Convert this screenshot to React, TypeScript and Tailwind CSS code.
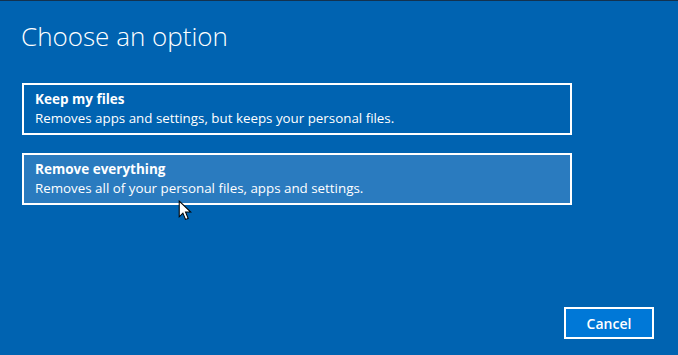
const options = [
  { id: 1, title: "Keep my files", desc: "Removes apps and settings, but keeps your personal files.", hover: false },
  { id: 2, title: "Remove everything", desc: "Removes all of your personal files, apps and settings.", hover: true },
];

function Cursor() {
  return (
    <svg className="absolute left-[178px] top-[199px]" width="14" height="21" viewBox="0 0 13 20">
      <path d="M1 1 L1 16 L4.5 12.5 L7 18.5 L9.5 17.5 L7 11.5 L12 11.5 Z" fill="#fff" stroke="#000" strokeWidth="1" strokeLinejoin="miter" />
    </svg>
  );
}

export default function App() {
  return (
    <div className="relative w-[678px] h-[355px] bg-[#0063b1] border-t border-[#13324f] flex flex-col text-white font-['Open_Sans',sans-serif] overflow-hidden">
      <h1 className="ml-[21px] mt-[18px] text-[26px] font-light leading-[34px]">Choose an option</h1>

      <div className="ml-[22px] mt-[30px] flex flex-col gap-[18px]">
        {options.map((opt) => (
          <div
            key={opt.id}
            className={`w-[550px] h-[52px] border-2 border-white pl-[11px] flex flex-col justify-center ${opt.hover ? "bg-[#2a7bbf]" : ""}`}
          >
            <div className="text-[13.5px] font-bold leading-[19px]">{opt.title}</div>
            <div className="text-[13.35px] leading-[19px]">{opt.desc}</div>
          </div>
        ))}
      </div>

      <div className="mt-auto flex justify-end pr-[24px] pb-[16px]">
        <button className="w-[90px] h-[32px] border-2 border-white bg-[#0078d7] text-[14px] font-semibold text-white">
          Cancel
        </button>
      </div>

      <Cursor />
    </div>
  );
}
